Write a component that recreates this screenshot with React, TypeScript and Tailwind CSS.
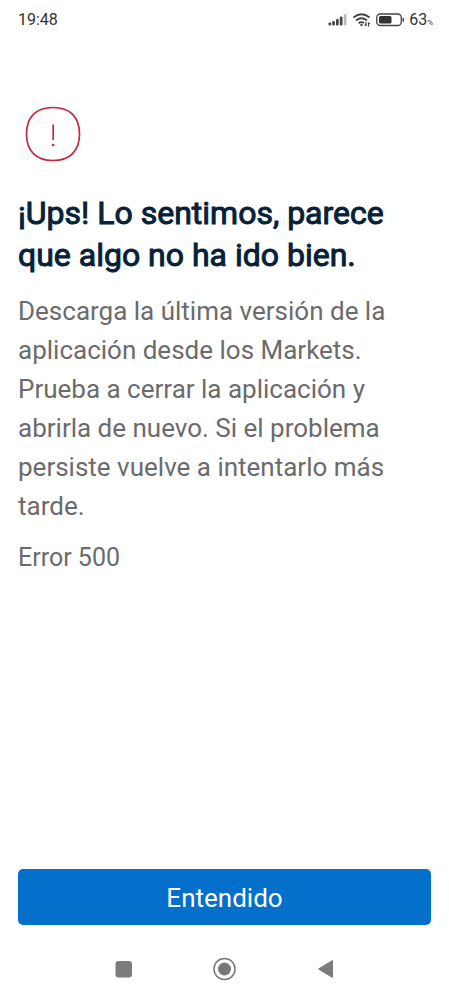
export default function App() {
  return (
    <div className="flex min-h-screen flex-col bg-white font-['Roboto',sans-serif]">
      <header className="flex h-10 items-center justify-between pr-4 pl-[18px] text-[16px] text-[#333]">
        <time>19:48</time>
        <div className="flex items-center gap-1">
          <svg width="20" height="14" viewBox="0 0 20 14" fill="#444" role="img" aria-label="Señal móvil">
            <rect x="0.500" y="9.500" width="2.700" height="3" rx="1" />
            <rect x="4.200" y="8" width="2.700" height="4.500" rx="1" />
            <rect x="8" y="6" width="2.700" height="6.500" rx="1" />
            <rect x="11.800" y="3.500" width="2.700" height="9" rx="1" />
            <rect x="15.800" y="1" width="2.700" height="11.500" rx="1" fill="#bbb" />
          </svg>
          <svg width="20" height="16" viewBox="0 0 20 16" fill="none" stroke="#444" strokeWidth="1.800" role="img" aria-label="Wifi">
            <path d="M1.500 5.500Q9.500-1 17.500 5.500M4 8.500Q9.500 4 15 8.500M6.500 11.300Q9.500 9 12 11" />
            <circle cx="9.500" cy="13" r="1.200" fill="#444" stroke="none" />
            <path d="M14 10V14M12.800 12.600L14 14M16.500 14.500V10.500M17.700 12L16.500 10.500" strokeWidth="1.200" />
          </svg>
          <svg width="29" height="14" viewBox="0 0 29 14" role="img" aria-label="Batería">
            <rect x="0.750" y="1" width="24.500" height="11.500" rx="3.500" fill="none" stroke="#444" strokeWidth="1.300" />
            <rect x="3" y="3" width="12.500" height="7.500" rx="1.500" fill="#333" />
            <rect x="26.500" y="4.800" width="1.500" height="4" rx="0.750" fill="#444" />
          </svg>
          <span>63<small className="text-[8px]">%</small></span>
        </div>
      </header>
      <main className="flex grow flex-col px-[18px] pt-[66px]">
        <svg className="ml-[7px]" width="56" height="56" viewBox="0 0 56 56" fill="none" stroke="#c4283c" strokeWidth="1.700" role="img" aria-label="Error">
          <path d="M28 1.500C45 1.500 54.500 11 54.500 28S45 54.500 28 54.500 1.500 45 1.500 28 11 1.500 28 1.500Z" />
          <path d="M28.200 18.500V34" />
          <circle cx="28.200" cy="39" r="1.300" fill="#c4283c" stroke="none" />
        </svg>
        <h1 className="mt-[30px] text-[32px] leading-[42px] font-normal text-[#072138] [-webkit-text-stroke:1px_#072138]">¡Ups! Lo sentimos, parece que algo no ha ido bien.</h1>
        <p className="mt-4 text-[26px] leading-[39px] text-[#6b6b6d]">Descarga la última versión de la aplicación desde los Markets. Prueba a cerrar la aplicación y abrirla de nuevo. Si el problema persiste vuelve a intentarlo más tarde.</p>
        <p className="mt-3 text-[25px] leading-[39px] text-[#6b6b6d]">Error 500</p>
        <button type="button" className="mt-auto h-14 rounded-[5px] bg-[#056fcc] pt-0.5 text-[26px] text-white">Entendido</button>
      </main>
      <nav aria-label="Sistema" className="flex h-[73px] items-center justify-center gap-[61px] pt-[14px]">
        <button type="button" aria-label="Recientes" className="flex h-10 w-10 items-center justify-center">
          <svg width="18" height="18" viewBox="0 0 18 18" fill="#7c7c7c"><rect x="0.500" y="1" width="16.500" height="16.500" rx="3" /></svg>
        </button>
        <button type="button" aria-label="Inicio" className="flex h-10 w-10 items-center justify-center">
          <svg width="24" height="24" viewBox="0 0 24 24"><circle cx="11.500" cy="12" r="10.500" fill="none" stroke="#777" strokeWidth="1.500" /><circle cx="11.500" cy="12" r="6.500" fill="#777" /></svg>
        </button>
        <button type="button" aria-label="Atrás" className="flex h-10 w-10 items-center justify-center">
          <svg width="18" height="20" viewBox="0 0 18 20" fill="#7c7c7c" stroke="#7c7c7c" strokeLinejoin="round"><path d="M15.500 1.500V18.500L1.500 10Z" /></svg>
        </button>
      </nav>
    </div>
  );
}
